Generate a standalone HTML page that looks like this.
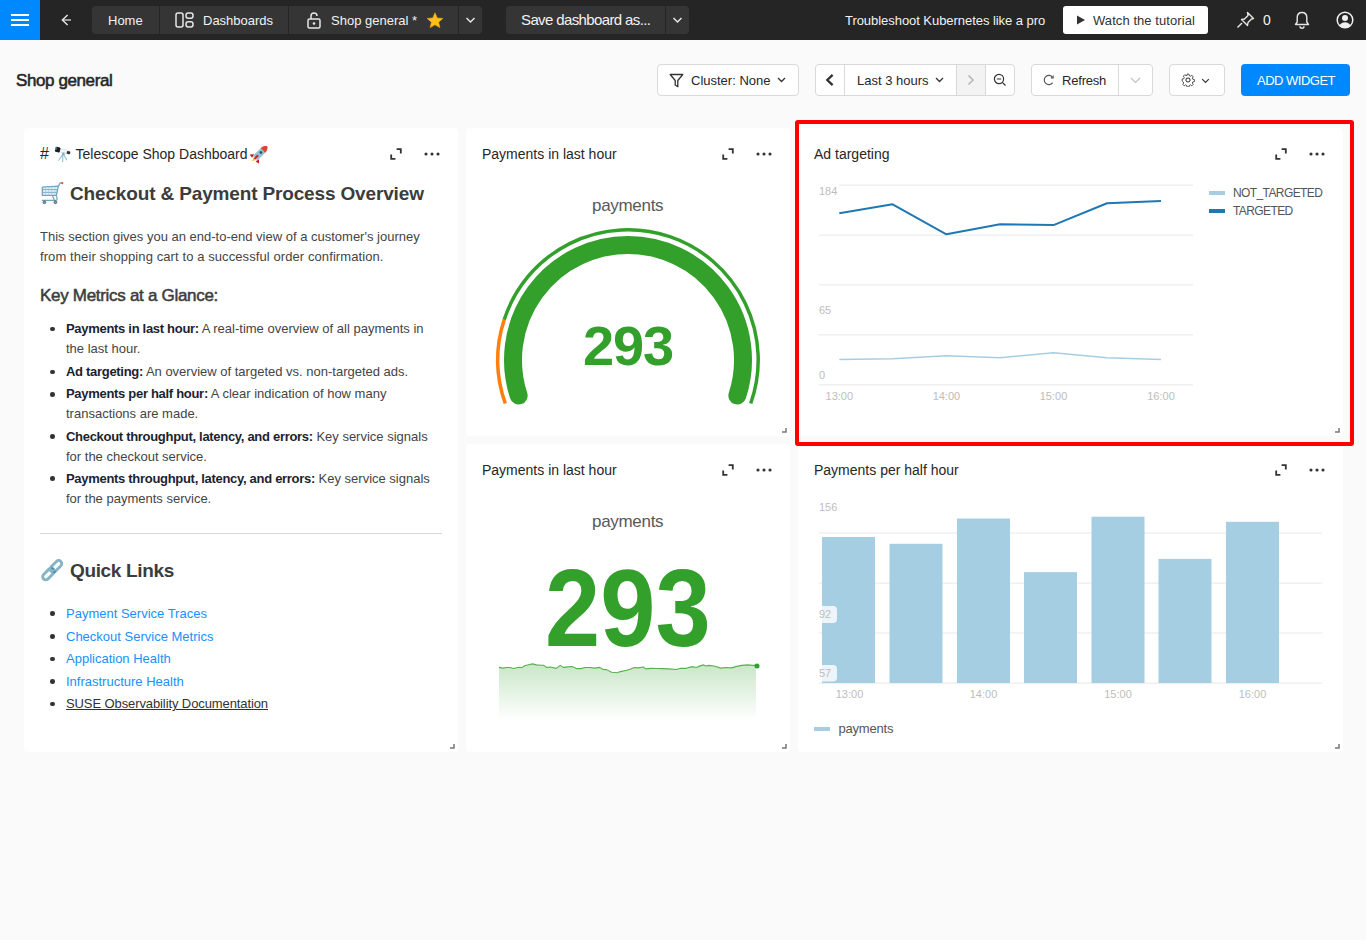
<!DOCTYPE html>
<html><head><meta charset="utf-8">
<style>
*{box-sizing:border-box;margin:0;padding:0}
html,body{width:1366px;height:940px;overflow:hidden;background:#fafafa;font-family:"Liberation Sans",sans-serif;color:#333}
.a{position:absolute}
.t{position:absolute;white-space:nowrap;line-height:1}
#top{position:absolute;left:0;top:0;width:1366px;height:40px;background:#252525}
#burger{position:absolute;left:0;top:0;width:40px;height:40px;background:#0088ff}
.db{position:absolute;top:6px;height:28px;background:#353535;border-radius:4px}
.dv{position:absolute;top:6px;width:1px;height:28px;background:#262626}
.wt{color:#f2f2f2;font-size:13px}
.btn{position:absolute;top:64px;height:32px;background:#fff;border:1px solid #d9d9d9;border-radius:4px}
.bv{position:absolute;top:64px;width:1px;height:32px;background:#d9d9d9}
.card{position:absolute;background:#fff;border-radius:4px}
.ctitle{position:absolute;font-size:14px;color:#262626;white-space:nowrap;line-height:1}
.md{color:#444;font-size:13px}
</style></head><body>
<div id="top"></div>
<div id="burger"></div>
<svg class="a" style="left:0;top:0" width="1366" height="40">
  <rect x="11" y="14" width="18" height="2" fill="#fff"/>
  <rect x="11" y="19" width="18" height="2" fill="#fff"/>
  <rect x="11" y="24" width="18" height="2" fill="#fff"/>
  <path d="M71 20H63" stroke="#a8a8a8" stroke-width="1.8" fill="none"/><path d="M67.6 15L62.3 20L67.6 25" stroke="#f0f0f0" stroke-width="1.3" fill="none"/>
</svg>

<!-- breadcrumb buttons -->
<div class="db" style="left:92px;width:390px"></div>
<div class="dv" style="left:159px"></div>
<div class="dv" style="left:288px"></div>
<div class="dv" style="left:458px"></div>
<div class="t wt" style="left:108px;top:14px">Home</div>
<svg class="a" style="left:175px;top:12px" width="20" height="16" viewBox="0 0 20 16">
  <rect x="1" y="1" width="7" height="14" rx="2" fill="none" stroke="#e6e6e6" stroke-width="1.5"/>
  <rect x="11" y="1" width="7" height="5.2" rx="2.2" fill="none" stroke="#e6e6e6" stroke-width="1.5"/>
  <rect x="11" y="9.8" width="7" height="5.2" rx="2.2" fill="none" stroke="#e6e6e6" stroke-width="1.5"/>
</svg>
<div class="t wt" style="left:203px;top:14px">Dashboards</div>
<svg class="a" style="left:306px;top:11px" width="16" height="18" viewBox="0 0 16 18">
  <rect x="2" y="8" width="12" height="9" rx="1.5" fill="none" stroke="#e6e6e6" stroke-width="1.5"/>
  <path d="M5 8V5a3 3 0 0 1 6 0" fill="none" stroke="#e6e6e6" stroke-width="1.5"/>
  <circle cx="8" cy="12.5" r="1.3" fill="#e6e6e6"/>
</svg>
<div class="t wt" style="left:331px;top:14px">Shop general *</div>
<svg class="a" style="left:426px;top:12px" width="18" height="17" viewBox="0 0 24 23">
  <path d="M12 1l3.1 7 7.6.7-5.8 5 1.8 7.5L12 17.3 5.3 21.2l1.8-7.5-5.8-5 7.6-.7z" fill="#fcc21b" stroke="#f4a400" stroke-width="0.8"/>
</svg>
<svg class="a" style="left:465px;top:16px" width="11" height="8" viewBox="0 0 11 8">
  <path d="M1.5 2l4 4 4-4" fill="none" stroke="#e6e6e6" stroke-width="1.5"/>
</svg>
<div class="db" style="left:506px;width:183px"></div>
<div class="dv" style="left:665px"></div>
<div class="t wt" style="left:521px;top:12.2px;font-size:15px;letter-spacing:-0.62px">Save dashboard as...</div>
<svg class="a" style="left:672px;top:16px" width="11" height="8" viewBox="0 0 11 8">
  <path d="M1.5 2l4 4 4-4" fill="none" stroke="#e6e6e6" stroke-width="1.5"/>
</svg>
<div class="t wt" style="left:845px;top:14px;font-size:13px;letter-spacing:-0.05px">Troubleshoot Kubernetes like a pro</div>
<div class="a" style="left:1063px;top:6px;width:145px;height:28px;background:#fff;border-radius:3px"></div>
<svg class="a" style="left:1076px;top:14px" width="10" height="12" viewBox="0 0 10 12"><path d="M1 1.5v9l8-4.5z" fill="#333"/></svg>
<div class="t" style="left:1093px;top:14px;font-size:13px;color:#333;letter-spacing:0.07px">Watch the tutorial</div>
<svg class="a" style="left:1236px;top:11px" width="20" height="18" viewBox="0 0 20 18">
  <path d="M11.5 1.5l6 6-2 .5-3.5 3.5-.5 3-6-6 3-.5L12 4.5z" fill="none" stroke="#e6e6e6" stroke-width="1.4" stroke-linejoin="round"/>
  <path d="M6 12l-4.5 4.5" stroke="#e6e6e6" stroke-width="1.4"/>
</svg>
<div class="t wt" style="left:1263px;top:13px;font-size:14px">0</div>
<svg class="a" style="left:1294px;top:11px" width="16" height="18" viewBox="0 0 16 18">
  <path d="M8 1.5c-3 0-4.8 2.2-4.8 5v4.5L1.5 13.5h13l-1.7-2.5V6.5c0-2.8-1.8-5-4.8-5z" fill="none" stroke="#e6e6e6" stroke-width="1.4" stroke-linejoin="round"/>
  <path d="M6 15.2a2 2 0 0 0 4 0" fill="none" stroke="#e6e6e6" stroke-width="1.4"/>
</svg>
<svg class="a" style="left:1336px;top:11px" width="18" height="18" viewBox="0 0 18 18">
  <circle cx="9" cy="9" r="7.8" fill="none" stroke="#f0f0f0" stroke-width="1.5"/>
  <circle cx="9" cy="7" r="3" fill="#f0f0f0"/>
  <path d="M3.6 14.2c1.2-2 3.1-3 5.4-3s4.2 1 5.4 3a7.6 7.6 0 0 1-10.8 0z" fill="#f0f0f0"/>
</svg>

<!-- toolbar row -->
<div class="t" style="left:16px;top:71.6px;font-size:17px;color:#262626;letter-spacing:-0.4px;-webkit-text-stroke:0.55px #262626">Shop general</div>
<div class="btn" style="left:657px;width:142px"></div>
<svg class="a" style="left:669px;top:73px" width="15" height="15" viewBox="0 0 15 15">
  <path d="M1.2 1.5h12.6L8.8 7.5v6.2L6.2 12V7.5z" fill="none" stroke="#333" stroke-width="1.3" stroke-linejoin="round"/>
</svg>
<div class="t" style="left:691px;top:74px;font-size:13px;color:#262626">Cluster: None</div>
<svg class="a" style="left:777px;top:77px" width="9" height="6" viewBox="0 0 9 6"><path d="M1 1l3.5 3.5L8 1" fill="none" stroke="#333" stroke-width="1.3"/></svg>

<div class="btn" style="left:815px;width:200px"></div>
<div class="a" style="left:956px;top:65px;width:29px;height:30px;background:#f3f3f3"></div>
<div class="bv" style="left:844px"></div>
<div class="bv" style="left:956px"></div>
<div class="bv" style="left:985px"></div>
<svg class="a" style="left:824px;top:74px" width="12" height="12" viewBox="0 0 12 12"><path d="M8.6 0.9L3.3 6l5.3 5.1" fill="none" stroke="#333" stroke-width="2.3"/></svg>
<div class="t" style="left:857px;top:74px;font-size:13px;color:#262626">Last 3 hours</div>
<svg class="a" style="left:935px;top:77px" width="9" height="6" viewBox="0 0 9 6"><path d="M1 1l3.5 3.5L8 1" fill="none" stroke="#333" stroke-width="1.3"/></svg>
<svg class="a" style="left:965px;top:74px" width="11" height="12" viewBox="0 0 11 12"><path d="M3.5 1.5L8 6l-4.5 4.5" fill="none" stroke="#b5b5b5" stroke-width="1.5"/></svg>
<svg class="a" style="left:993px;top:73px" width="14" height="14" viewBox="0 0 14 14">
  <circle cx="6" cy="6" r="4.6" fill="none" stroke="#333" stroke-width="1.2"/>
  <path d="M3.8 6h4.4M9.3 9.3L12.5 12.5" stroke="#333" stroke-width="1.2"/>
</svg>

<div class="btn" style="left:1031px;width:122px"></div>
<div class="bv" style="left:1118px"></div>
<svg class="a" style="left:1043px;top:74px" width="12" height="12" viewBox="0 0 12 12">
<path d="M9.6 3.3A4.6 4.6 0 1 0 9.6 8.7" fill="none" stroke="#555" stroke-width="1.2"/>
<path d="M10.2 1.6v2.3H7.9" fill="none" stroke="#555" stroke-width="1.1"/>
</svg>
<div class="t" style="left:1062px;top:74px;font-size:13px;color:#262626;letter-spacing:-0.2px">Refresh</div>
<svg class="a" style="left:1130px;top:77px" width="11" height="7" viewBox="0 0 11 7"><path d="M1 1l4.5 4.5L10 1" fill="none" stroke="#c0c0c0" stroke-width="1.2"/></svg>

<div class="btn" style="left:1169px;width:56px"></div>
<svg class="a" style="left:1181px;top:73px" width="14" height="14" viewBox="0 0 24 24">
  <path d="M12 8.5a3.5 3.5 0 1 0 0 7 3.5 3.5 0 0 0 0-7z" fill="none" stroke="#444" stroke-width="1.8"/>
  <path d="M10.3 2h3.4l.6 2.8 1.9.8 2.4-1.6 2.4 2.4-1.6 2.4.8 1.9 2.8.6v3.4l-2.8.6-.8 1.9 1.6 2.4-2.4 2.4-2.4-1.6-1.9.8-.6 2.8h-3.4l-.6-2.8-1.9-.8-2.4 1.6-2.4-2.4 1.6-2.4-.8-1.9L2 13.7v-3.4l2.8-.6.8-1.9L4 5.4 6.4 3l2.4 1.6 1.9-.8z" fill="none" stroke="#444" stroke-width="1.6" stroke-linejoin="round"/>
</svg>
<svg class="a" style="left:1201px;top:77.5px" width="9" height="6" viewBox="0 0 9 6"><path d="M1.2 1.2l3.3 3.3 3.3-3.3" fill="none" stroke="#333" stroke-width="1.2"/></svg>

<div class="a" style="left:1241px;top:64px;width:109px;height:32px;background:#0088ff;border-radius:4px"></div>
<div class="t" style="left:1257px;top:74px;font-size:13px;color:#fff;letter-spacing:-0.5px">ADD WIDGET</div>

<div class="card" style="left:24px;top:128px;width:434px;height:624px"></div>
<div class="card" style="left:466px;top:128px;width:324px;height:308px"></div>
<div class="card" style="left:798px;top:128px;width:545px;height:308px"></div>
<div class="card" style="left:466px;top:444px;width:324px;height:308px"></div>
<div class="card" style="left:798px;top:444px;width:545px;height:308px"></div>
<svg class="a" style="left:390px;top:148px" width="12" height="12" viewBox="0 0 12 12"><path d="M6.6 1.2h4.2V5.4M1.2 6.6v4.2H5.4" fill="none" stroke="#333" stroke-width="1.8"/></svg><svg class="a" style="left:424px;top:152px" width="16" height="4" viewBox="0 0 16 4"><circle cx="2" cy="2" r="1.55" fill="#333"/><circle cx="8" cy="2" r="1.55" fill="#333"/><circle cx="14" cy="2" r="1.55" fill="#333"/></svg><svg class="a" style="left:450px;top:744px" width="5" height="5" viewBox="0 0 5 5"><path d="M4 0v4H0" fill="none" stroke="#777" stroke-width="1.5"/></svg><svg class="a" style="left:722px;top:148px" width="12" height="12" viewBox="0 0 12 12"><path d="M6.6 1.2h4.2V5.4M1.2 6.6v4.2H5.4" fill="none" stroke="#333" stroke-width="1.8"/></svg><svg class="a" style="left:756px;top:152px" width="16" height="4" viewBox="0 0 16 4"><circle cx="2" cy="2" r="1.55" fill="#333"/><circle cx="8" cy="2" r="1.55" fill="#333"/><circle cx="14" cy="2" r="1.55" fill="#333"/></svg><svg class="a" style="left:782px;top:428px" width="5" height="5" viewBox="0 0 5 5"><path d="M4 0v4H0" fill="none" stroke="#777" stroke-width="1.5"/></svg><svg class="a" style="left:1275px;top:148px" width="12" height="12" viewBox="0 0 12 12"><path d="M6.6 1.2h4.2V5.4M1.2 6.6v4.2H5.4" fill="none" stroke="#333" stroke-width="1.8"/></svg><svg class="a" style="left:1309px;top:152px" width="16" height="4" viewBox="0 0 16 4"><circle cx="2" cy="2" r="1.55" fill="#333"/><circle cx="8" cy="2" r="1.55" fill="#333"/><circle cx="14" cy="2" r="1.55" fill="#333"/></svg><svg class="a" style="left:1335px;top:428px" width="5" height="5" viewBox="0 0 5 5"><path d="M4 0v4H0" fill="none" stroke="#777" stroke-width="1.5"/></svg><svg class="a" style="left:722px;top:464px" width="12" height="12" viewBox="0 0 12 12"><path d="M6.6 1.2h4.2V5.4M1.2 6.6v4.2H5.4" fill="none" stroke="#333" stroke-width="1.8"/></svg><svg class="a" style="left:756px;top:468px" width="16" height="4" viewBox="0 0 16 4"><circle cx="2" cy="2" r="1.55" fill="#333"/><circle cx="8" cy="2" r="1.55" fill="#333"/><circle cx="14" cy="2" r="1.55" fill="#333"/></svg><svg class="a" style="left:782px;top:744px" width="5" height="5" viewBox="0 0 5 5"><path d="M4 0v4H0" fill="none" stroke="#777" stroke-width="1.5"/></svg><svg class="a" style="left:1275px;top:464px" width="12" height="12" viewBox="0 0 12 12"><path d="M6.6 1.2h4.2V5.4M1.2 6.6v4.2H5.4" fill="none" stroke="#333" stroke-width="1.8"/></svg><svg class="a" style="left:1309px;top:468px" width="16" height="4" viewBox="0 0 16 4"><circle cx="2" cy="2" r="1.55" fill="#333"/><circle cx="8" cy="2" r="1.55" fill="#333"/><circle cx="14" cy="2" r="1.55" fill="#333"/></svg><svg class="a" style="left:1335px;top:744px" width="5" height="5" viewBox="0 0 5 5"><path d="M4 0v4H0" fill="none" stroke="#777" stroke-width="1.5"/></svg><div class="ctitle" style="left:482px;top:147.1px">Payments in last hour</div><div class="ctitle" style="left:814px;top:147.1px">Ad targeting</div><div class="ctitle" style="left:482px;top:463.1px">Payments in last hour</div><div class="ctitle" style="left:814px;top:463.1px">Payments per half hour</div>
<div class="t" style="left:40px;top:145.5px;font-size:16px;color:#262626">#</div><svg class="a" style="left:52px;top:142px" width="22" height="22" viewBox="0 0 22 22">
<path d="M11 12L6.5 18.8M11 12L10.6 20M11.5 12L14.8 18.2" stroke="#8ec3d9" stroke-width="1.1"/>
<g transform="rotate(14 11 9)">
<rect x="4" y="7.2" width="14" height="3.6" rx="0.8" fill="#f4f4f4" stroke="#d8d8d8" stroke-width="0.5"/>
<rect x="3" y="6.3" width="5" height="5.2" rx="1" fill="#1e1e1e"/>
<rect x="3" y="6.8" width="1.2" height="2.8" fill="#4aa3d1"/>
<rect x="15" y="7.8" width="3.4" height="2.8" rx="0.6" fill="#333"/>
</g>
<rect x="10.3" y="10.5" width="2.2" height="2.6" fill="#6fb2cf"/>
</svg><div class="ctitle" style="left:75.5px;top:147.1px">Telescope Shop Dashboard</div><svg class="a" style="left:247px;top:142px" width="24" height="24" viewBox="0 0 24 24">
<g transform="translate(13.2,11.2) rotate(-45)">
<path d="M-5 -3.5L-8.5 -6.5 -9 -2.5z" fill="#c8161d"/>
<path d="M-5 3.5L-8.5 6.5 -9 2.5z" fill="#c8161d"/>
<path d="M-7.5 -1.6L-11.5 0 -7.5 1.6z" fill="#f6c02c"/>
<path d="M-7 -3.2H4.5C7 -3.2 9 -1.5 10 0 9 1.5 7 3.2 4.5 3.2H-7z" fill="#8fc3da"/>
<path d="M4 -3.2C7 -3.2 9 -1.5 10 0 9 1.5 7 3.2 4 3.2z" fill="#e4432d"/>
<path d="M-8 -1L-3 -1 -3 1 -8 1z" fill="#d42020"/>
<circle cx="1" cy="0" r="1.4" fill="#3b4a5e"/>
</g>
</svg><svg class="a" style="left:37px;top:178px" width="30" height="30" viewBox="0 0 30 30">
<path d="M5.3 9.2L21.3 8.2 19.4 17.4H5.3z" fill="#e6f1f6" stroke="#6ea6c0" stroke-width="1.3" stroke-linejoin="round"/>
<path d="M5.5 11.6h15.3M5.5 14.4h14.6" stroke="#6ea6c0" stroke-width="0.9"/>
<path d="M8.5 9v8.3M11.6 8.8v8.6M14.7 8.6v8.8M17.8 8.4v9" stroke="#9cc3d5" stroke-width="0.6"/>
<path d="M21.3 8.2L23.2 4.9 25 4.9" fill="none" stroke="#6ea6c0" stroke-width="1.3"/>
<circle cx="25.3" cy="5.2" r="1.1" fill="#e05a3a"/>
<path d="M4.8 22.3H19.4M15.4 17.8c1 1.5 1.6 3 1.8 4.5M19.3 17.8c.9 1.4 1 3 .6 4.5" fill="none" stroke="#6ea6c0" stroke-width="1.2"/>
<circle cx="7.4" cy="24.3" r="1.4" fill="#6ea6c0" stroke="#555" stroke-width="0.8"/>
<circle cx="18.4" cy="24.3" r="1.4" fill="#6ea6c0" stroke="#555" stroke-width="0.8"/>
</svg><div class="t" style="left:70px;top:184.1px;font-size:19px;font-weight:bold;color:#3c3c3c;letter-spacing:-0.15px">Checkout &amp; Payment Process Overview</div><div class="t md" style="left:40px;top:230.2px">This section gives you an end-to-end view of a customer's journey</div><div class="t md" style="left:40px;top:250.0px;letter-spacing:0.09px">from their shopping cart to a successful order confirmation.</div><div class="t" style="left:40px;top:286.6px;font-size:17px;color:#3c3c3c;letter-spacing:-0.3px;-webkit-text-stroke:0.5px #3c3c3c">Key Metrics at a Glance:</div><div class="a" style="left:50px;top:326.7px;width:4.6px;height:4.6px;border-radius:50%;background:#333"></div><div class="t md" style="left:66px;top:322.2px"><b style="color:#1b2330;letter-spacing:-0.3px">Payments in last hour:</b> A real-time overview of all payments in</div><div class="t md" style="left:66px;top:342.2px">the last hour.</div><div class="a" style="left:50px;top:369.5px;width:4.6px;height:4.6px;border-radius:50%;background:#333"></div><div class="t md" style="left:66px;top:365.0px"><b style="color:#1b2330;letter-spacing:-0.3px">Ad targeting:</b> An overview of targeted vs. non-targeted ads.</div><div class="a" style="left:50px;top:392.0px;width:4.6px;height:4.6px;border-radius:50%;background:#333"></div><div class="t md" style="left:66px;top:386.7px"><b style="color:#1b2330;letter-spacing:-0.3px">Payments per half hour:</b> A clear indication of how many</div><div class="t md" style="left:66px;top:406.7px">transactions are made.</div><div class="a" style="left:50px;top:434.1px;width:4.6px;height:4.6px;border-radius:50%;background:#333"></div><div class="t md" style="left:66px;top:429.6px"><b style="color:#1b2330;letter-spacing:-0.3px">Checkout throughput, latency, and errors:</b> Key service signals</div><div class="t md" style="left:66px;top:449.6px">for the checkout service.</div><div class="a" style="left:50px;top:476.3px;width:4.6px;height:4.6px;border-radius:50%;background:#333"></div><div class="t md" style="left:66px;top:471.8px"><b style="color:#1b2330;letter-spacing:-0.3px">Payments throughput, latency, and errors:</b> Key service signals</div><div class="t md" style="left:66px;top:491.8px">for the payments service.</div><div class="a" style="left:40px;top:533px;width:402px;height:1px;background:#d9d9d9"></div><svg class="a" style="left:35px;top:552px" width="40" height="36" viewBox="0 0 40 36">
<g transform="translate(21,14.3) rotate(-45)"><rect x="-6.9" y="-3.1" width="13.8" height="6.2" rx="3.1" fill="none" stroke="#86b4c7" stroke-width="2.9"/></g>
<g transform="translate(13.5,22) rotate(-45)"><rect x="-6.9" y="-3.1" width="13.8" height="6.2" rx="3.1" fill="none" stroke="#86b4c7" stroke-width="2.9"/></g>
<path d="M16.5 15.5l2 2M18.5 20.5l2 -1" stroke="#3d7f95" stroke-width="1.4"/>
</svg><div class="t" style="left:70px;top:560.9px;font-size:19px;font-weight:bold;color:#3c3c3c;letter-spacing:-0.35px">Quick Links</div><div class="a" style="left:50px;top:611.4px;width:4.6px;height:4.6px;border-radius:50%;background:#333"></div><div class="t" style="left:66px;top:606.9px;font-size:13px;color:#1890ff">Payment Service Traces</div><div class="a" style="left:50px;top:634.3px;width:4.6px;height:4.6px;border-radius:50%;background:#333"></div><div class="t" style="left:66px;top:629.8px;font-size:13px;color:#1890ff">Checkout Service Metrics</div><div class="a" style="left:50px;top:656.5px;width:4.6px;height:4.6px;border-radius:50%;background:#333"></div><div class="t" style="left:66px;top:652.0px;font-size:13px;color:#1890ff">Application Health</div><div class="a" style="left:50px;top:679.0px;width:4.6px;height:4.6px;border-radius:50%;background:#333"></div><div class="t" style="left:66px;top:674.5px;font-size:13px;color:#1890ff">Infrastructure Health</div><div class="a" style="left:50px;top:701.8px;width:4.6px;height:4.6px;border-radius:50%;background:#333"></div><div class="t" style="left:66px;top:697.3px;font-size:13px;color:#333;text-decoration:underline;letter-spacing:-0.1px">SUSE Observability Documentation</div>
<svg class="a" style="left:0;top:0" width="1366" height="940" overflow="visible">
<path d="M518.63 395.54A115 115 0 1 1 737.37 395.54" fill="none" stroke="#33a02c" stroke-width="18" stroke-linecap="round"/>
<path d="M505.27 403.46A130.2 130.2 0 0 1 504.17 319.77" fill="none" stroke="#ff7f0e" stroke-width="3.5"/>
<path d="M504.17 319.77A130.2 130.2 0 1 1 750.73 403.46" fill="none" stroke="#33a02c" stroke-width="3.5"/>
</svg><div class="t" style="left:592px;top:196.8px;font-size:17px;color:#595959;letter-spacing:-0.3px">payments</div><div class="t" style="left:583px;top:317.6px;width:89px;text-align:center;font-size:56px;font-weight:bold;color:#33a02c;letter-spacing:-1.2px">293</div><div class="t" style="left:592px;top:512.9px;font-size:17px;color:#595959;letter-spacing:-0.3px">payments</div><div class="t" style="left:537px;top:553.8px;width:180px;text-align:center;font-size:109px;font-weight:bold;color:#33a02c;transform:scaleX(0.91);transform-origin:90px 0">293</div><svg class="a" style="left:0;top:0" width="1366" height="940">
<defs><linearGradient id="sg" x1="0" y1="0" x2="0" y2="1">
<stop offset="0" stop-color="#33a02c" stop-opacity="0.26"/><stop offset="1" stop-color="#33a02c" stop-opacity="0"/></linearGradient></defs>
<path d="M498.95 667.35 L502.91 668.14 L506.86 667.45 L509.82 667.45 L513.77 668.54 L518.72 667.25 L521.68 667.65 L524.64 665.67 L528.6 664.68 L532.55 663.89 L536.5 664.88 L541.44 665.28 L543.91 665.38 L546.38 667.35 L550.34 667.06 L556.26 668.34 L560.22 665.38 L563.18 667.35 L568.12 666.86 L572.08 666.56 L577.02 668.64 L580.97 668.64 L584.92 667.45 L589.86 667.45 L594.8 668.14 L599.74 667.35 L602.71 669.33 L606.66 669.62 L611.6 672.29 L617.04 672.79 L620.49 671.6 L625.43 670.51 L625.0 670.81 L629.94 669.33 L634.39 667.45 L638.83 667.85 L643.28 667.06 L645.75 668.83 L650.69 668.34 L656.62 668.44 L662.55 668.64 L668.48 668.83 L676.38 669.43 L680.34 668.34 L686.26 668.34 L689.23 667.35 L693.18 666.66 L696.15 667.45 L700.1 665.87 L703.56 664.88 L706.03 666.07 L708.99 665.38 L713.93 666.07 L720.85 668.14 L725.79 667.45 L731.72 667.85 L736.66 666.36 L741.6 665.38 L747.53 664.88 L752.96 665.38 L756 665.4 L756 720 L499 720 Z" fill="url(#sg)"/>
<path d="M498.95 667.35 L502.91 668.14 L506.86 667.45 L509.82 667.45 L513.77 668.54 L518.72 667.25 L521.68 667.65 L524.64 665.67 L528.6 664.68 L532.55 663.89 L536.5 664.88 L541.44 665.28 L543.91 665.38 L546.38 667.35 L550.34 667.06 L556.26 668.34 L560.22 665.38 L563.18 667.35 L568.12 666.86 L572.08 666.56 L577.02 668.64 L580.97 668.64 L584.92 667.45 L589.86 667.45 L594.8 668.14 L599.74 667.35 L602.71 669.33 L606.66 669.62 L611.6 672.29 L617.04 672.79 L620.49 671.6 L625.43 670.51 L625.0 670.81 L629.94 669.33 L634.39 667.45 L638.83 667.85 L643.28 667.06 L645.75 668.83 L650.69 668.34 L656.62 668.44 L662.55 668.64 L668.48 668.83 L676.38 669.43 L680.34 668.34 L686.26 668.34 L689.23 667.35 L693.18 666.66 L696.15 667.45 L700.1 665.87 L703.56 664.88 L706.03 666.07 L708.99 665.38 L713.93 666.07 L720.85 668.14 L725.79 667.45 L731.72 667.85 L736.66 666.36 L741.6 665.38 L747.53 664.88 L752.96 665.38 L756 665.4" fill="none" stroke="#55b24f" stroke-width="1.1" stroke-linejoin="round"/>
<circle cx="757" cy="666" r="2.5" fill="#33a02c"/>
</svg>
<svg class="a" style="left:0;top:0" width="1366" height="940"><rect x="819" y="184.5" width="374" height="1.5" fill="#f0f0f0"/><rect x="819" y="234.5" width="374" height="1.5" fill="#f0f0f0"/><rect x="819" y="284.0" width="374" height="1.5" fill="#f0f0f0"/><rect x="819" y="334.0" width="374" height="1.5" fill="#f0f0f0"/><rect x="819" y="384.0" width="374" height="1.5" fill="#f0f0f0"/><path d="M839.3 213.3 L892.6 204.3 L946.4 234.3 L1000 224.3 L1053.5 225.1 L1107 203.2 L1161 201.1" fill="none" stroke="#1f78b4" stroke-width="2" stroke-linejoin="round"/><path d="M839.3 359.5 L892.6 358.7 L946.4 355.7 L1000 357.8 L1053.5 352.8 L1107 357.8 L1161 359.5" fill="none" stroke="#a6cee3" stroke-width="1.5" stroke-linejoin="round"/><rect x="1209" y="191" width="16" height="4" fill="#a6cee3"/><rect x="1209" y="209" width="16" height="4" fill="#1f78b4"/><rect x="819" y="532.3" width="503" height="1.5" fill="#f0f0f0"/><rect x="819" y="582.4" width="503" height="1.5" fill="#f0f0f0"/><rect x="819" y="632.2" width="503" height="1.5" fill="#f0f0f0"/><rect x="819" y="682.5" width="503" height="1.5" fill="#f0f0f0"/><rect x="822" y="537" width="53" height="146" fill="#a6cee3"/><rect x="889.5" y="543.8" width="53" height="139.20000000000005" fill="#a6cee3"/><rect x="957" y="518.5" width="53" height="164.5" fill="#a6cee3"/><rect x="1024" y="572.1" width="53" height="110.89999999999998" fill="#a6cee3"/><rect x="1091.5" y="516.7" width="53" height="166.29999999999995" fill="#a6cee3"/><rect x="1158.5" y="558.9" width="53" height="124.10000000000002" fill="#a6cee3"/><rect x="1226" y="521.8" width="53" height="161.20000000000005" fill="#a6cee3"/><rect x="819" y="606" width="18" height="17" rx="4" fill="#fff" fill-opacity="0.8"/><rect x="819" y="665" width="18" height="16.5" rx="4" fill="#fff" fill-opacity="0.8"/><rect x="814" y="727" width="16" height="4" fill="#a6cee3"/></svg><div class="a" style="left:817px;top:181px;width:22px;height:13px;background:#fff"></div><div class="t" style="left:819px;top:185.7px;font-size:11px;color:#bdbdbd">184</div><div class="t" style="left:819px;top:304.7px;font-size:11px;color:#bdbdbd">65</div><div class="t" style="left:819px;top:370.2px;font-size:11px;color:#bdbdbd">0</div><div class="t" style="left:819.3px;width:40px;text-align:center;top:390.7px;font-size:11px;color:#bdbdbd">13:00</div><div class="t" style="left:926.4px;width:40px;text-align:center;top:390.7px;font-size:11px;color:#bdbdbd">14:00</div><div class="t" style="left:1033.5px;width:40px;text-align:center;top:390.7px;font-size:11px;color:#bdbdbd">15:00</div><div class="t" style="left:1141px;width:40px;text-align:center;top:390.7px;font-size:11px;color:#bdbdbd">16:00</div><div class="t" style="left:1233px;top:186.8px;font-size:12px;color:#555;letter-spacing:-0.6px">NOT_TARGETED</div><div class="t" style="left:1233px;top:204.8px;font-size:12px;color:#555;letter-spacing:-0.6px">TARGETED</div><div class="t" style="left:819px;top:502.2px;font-size:11px;color:#bdbdbd">156</div><div class="t" style="left:819px;top:609.2px;font-size:11px;color:#bdbdbd">92</div><div class="t" style="left:819px;top:667.7px;font-size:11px;color:#bdbdbd">57</div><div class="t" style="left:829.5px;width:40px;text-align:center;top:688.7px;font-size:11px;color:#bdbdbd">13:00</div><div class="t" style="left:963.5px;width:40px;text-align:center;top:688.7px;font-size:11px;color:#bdbdbd">14:00</div><div class="t" style="left:1098px;width:40px;text-align:center;top:688.7px;font-size:11px;color:#bdbdbd">15:00</div><div class="t" style="left:1232.5px;width:40px;text-align:center;top:688.7px;font-size:11px;color:#bdbdbd">16:00</div><div class="t" style="left:838.5px;top:722.0px;font-size:13px;color:#555;letter-spacing:-0.2px">payments</div><div class="a" style="left:795px;top:120px;width:559px;height:326px;border:4px solid #ff0000;border-radius:3px"></div>
</body></html>
